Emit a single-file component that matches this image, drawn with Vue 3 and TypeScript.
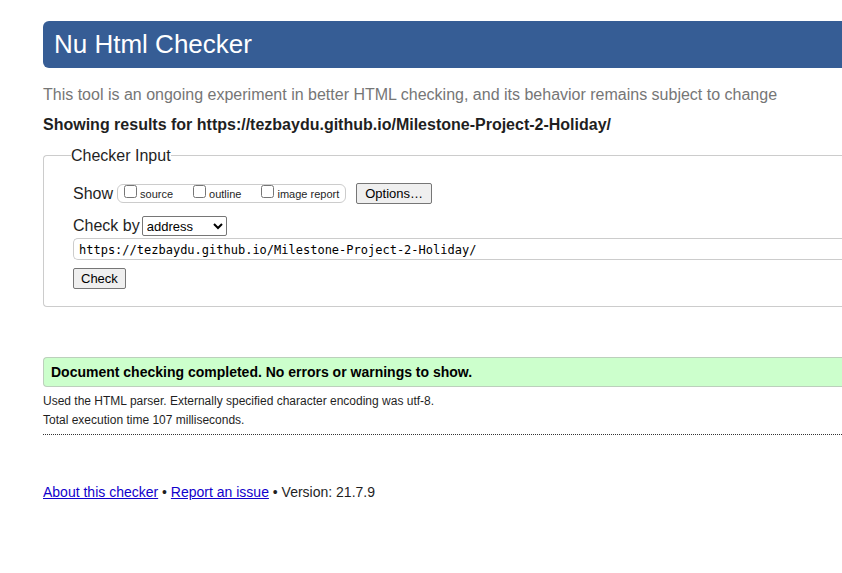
<script setup lang="ts">
import { ref } from 'vue'

interface ShowOption {
  id: string
  label: string
  checked: boolean
}

const showOptions = ref<ShowOption[]>([
  { id: 'show-source', label: 'source', checked: false },
  { id: 'show-outline', label: 'outline', checked: false },
  { id: 'show-image-report', label: 'image report', checked: false },
])

const method = ref('address')
const address = ref('https://tezbaydu.github.io/Milestone-Project-2-Holiday/')
const checkedUrl = 'https://tezbaydu.github.io/Milestone-Project-2-Holiday/'
</script>

<template>
  <div class="page">
    <header class="banner">
      <h1>Nu Html Checker</h1>
    </header>
    <p class="intro">This tool is an ongoing experiment in better HTML checking, and its behavior remains subject to change</p>
    <h2 class="showing">Showing results for {{ checkedUrl }}</h2>

    <form @submit.prevent>
      <fieldset class="checker">
        <legend>Checker Input</legend>
        <div class="fields">
          <div class="show-row">
            <span id="show-label">Show</span>
            <div class="toggles" role="group" aria-labelledby="show-label">
              <span v-for="option in showOptions" :key="option.id" class="toggle">
                <input :id="option.id" v-model="option.checked" type="checkbox" />
                <label :for="option.id">{{ option.label }}</label>
              </span>
            </div>
            <button type="button" class="options">Options…</button>
          </div>
          <div class="method-row">
            <label for="method">Check by</label>
            <select id="method" v-model="method">
              <option value="address">address</option>
              <option value="upload">file upload</option>
              <option value="text">text input</option>
            </select>
          </div>
          <input v-model="address" class="address" type="text" aria-labelledby="method" spellcheck="false" />
          <button type="submit" class="check">Check</button>
        </div>
      </fieldset>
    </form>

    <section class="results">
      <p class="success">Document checking completed. No errors or warnings to show.</p>
      <div class="details">
        <p>Used the HTML parser. Externally specified character encoding was utf-8.</p>
        <p>Total execution time 107 milliseconds.</p>
      </div>
    </section>

    <footer class="about">
      <a href="#about">About this checker</a> • <a href="#issues">Report an issue</a> • Version: 21.7.9
    </footer>
  </div>
</template>

<style>
body {
  margin: 0;
  background: #fff;
}
</style>

<style scoped>
.page {
  padding: 21px 0 40px 43px;
  font-family: "Liberation Sans", Arial, sans-serif;
  font-size: 16px;
  line-height: 20px;
  color: #1f1f1f;
}

.page * {
  box-sizing: border-box;
}

h1,
h2,
p {
  margin: 0;
}

.banner {
  padding: 8px 11px 9px;
  border-radius: 6px 0 0 6px;
  background: #365d95;
  color: #fff;
}

.banner h1 {
  font-size: 26px;
  font-weight: 400;
  line-height: 30px;
}

.intro {
  margin-top: 17px;
  color: #767676;
}

.showing {
  margin-top: 10px;
  font-size: 16px;
  font-weight: 700;
}

.checker {
  min-width: 0;
  margin: 10px 0 0;
  padding: 0;
  border: 1px solid #ccc;
  border-right: 0;
  border-radius: 4px 0 0 4px;
}

.checker legend {
  margin-left: 27px;
  padding: 0;
  line-height: 21px;
}

.fields {
  display: flex;
  flex-direction: column;
  align-items: flex-start;
  padding: 17px 0 17px 29px;
}

.show-row,
.method-row {
  display: flex;
  align-items: center;
}

.show-row {
  gap: 4px;
}

.toggles {
  display: flex;
  gap: 20px;
  height: 19px;
  padding: 0 6px;
  border: 1px solid #ccc;
  border-radius: 6px;
  font-size: 11px;
  line-height: 18px;
}

.toggle {
  display: flex;
  align-items: baseline;
  gap: 3px;
}

.toggle input {
  width: 13px;
  height: 13px;
  margin: 0;
}

button {
  height: 21px;
  padding: 0 7px;
  border: 1px solid #767676;
  border-radius: 2px;
  background: #efefef;
  color: #000;
  font-family: inherit;
  font-size: 13px;
  line-height: 19px;
}

.options {
  margin-left: 6px;
  padding: 0 8px;
}

.method-row {
  gap: 2px;
  margin-top: 12px;
}

.method-row select {
  width: 85px;
  height: 20px;
  padding: 0;
  border: 1px solid #767676;
  border-radius: 2px;
  background: #fff;
  color: #000;
  font-family: inherit;
  font-size: 13px;
}

.address {
  width: 100%;
  height: 22px;
  margin-top: 2px;
  padding: 2px 5px 0;
  border: 1px solid #ccc;
  border-right: 0;
  border-radius: 5px 0 0 5px;
  color: #000;
  font-family: "DejaVu Sans Mono", monospace;
  font-size: 12px;
}

.check {
  margin-top: 8px;
}

.results {
  margin-top: 50px;
}

.success {
  padding: 4px 7px;
  border: 1px solid #bcd0bc;
  border-right: 0;
  border-radius: 4px 0 0 4px;
  background: #cfc;
  color: #000;
  font-size: 14px;
  font-weight: 700;
}

.details {
  padding: 5px 0 4px;
  border-bottom: 1px dotted #333;
  font-size: 12px;
  line-height: 19px;
}

.about {
  margin-top: 47px;
  font-size: 14px;
}

.about a {
  color: #1100cc;
}
</style>
